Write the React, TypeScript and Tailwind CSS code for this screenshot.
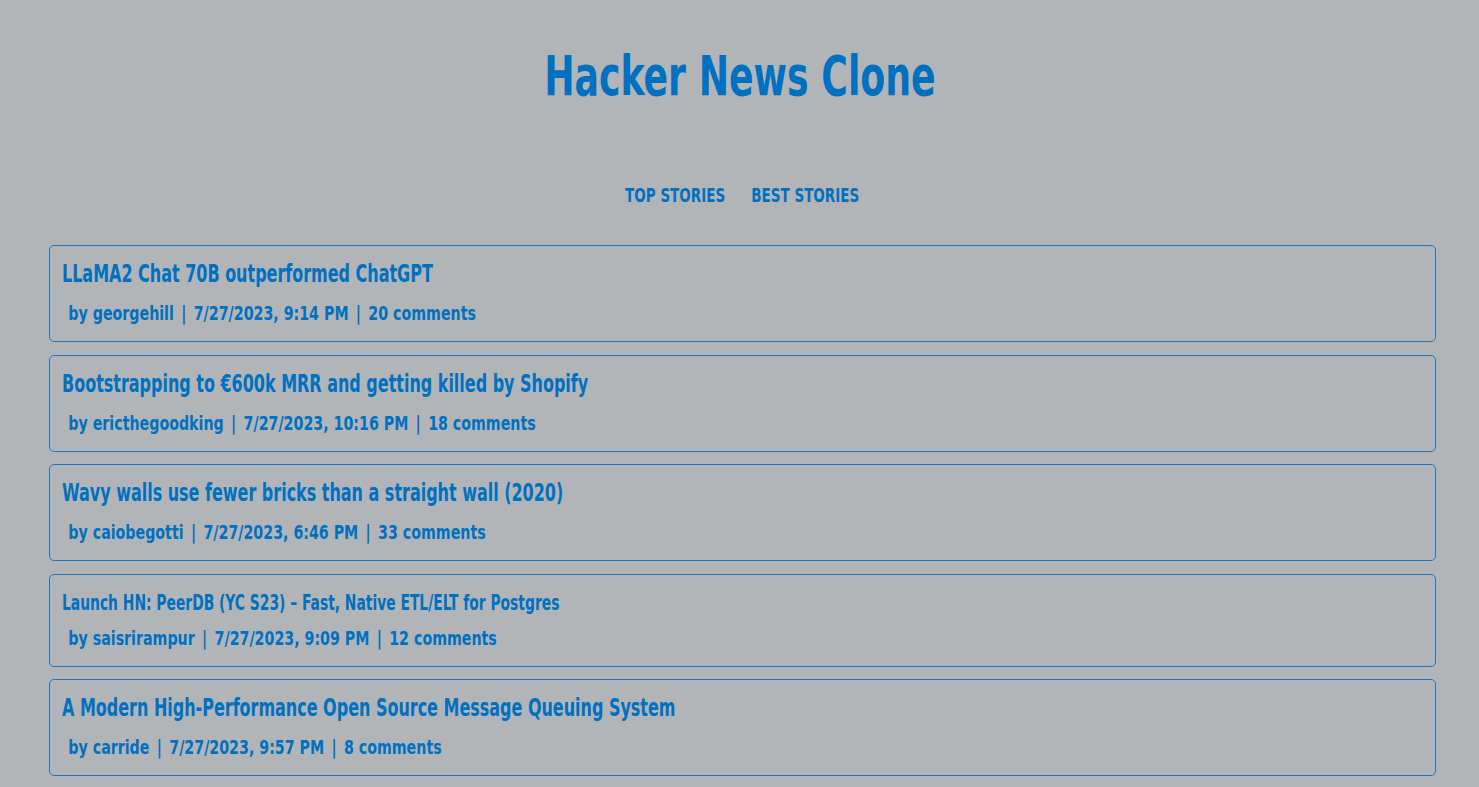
import React from "react";

type Story = {
  title: string;
  by: string;
  time: string;
  comments: number;
  small?: boolean;
};

const stories: Story[] = [
  { title: "LLaMA2 Chat 70B outperformed ChatGPT", by: "georgehill", time: "7/27/2023, 9:14 PM", comments: 20 },
  { title: "Bootstrapping to €600k MRR and getting killed by Shopify", by: "ericthegoodking", time: "7/27/2023, 10:16 PM", comments: 18 },
  { title: "Wavy walls use fewer bricks than a straight wall (2020)", by: "caiobegotti", time: "7/27/2023, 6:46 PM", comments: 33 },
  { title: "Launch HN: PeerDB (YC S23) – Fast, Native ETL/ELT for Postgres", by: "saisrirampur", time: "7/27/2023, 9:09 PM", comments: 12, small: true },
  { title: "A Modern High-Performance Open Source Message Queuing System", by: "carride", time: "7/27/2023, 9:57 PM", comments: 8 },
];

// no Impact installed, so squeeze the condensed DejaVu a bit to get the same look
const font = "font-['Impact','Liberation_Sans_Narrow','DejaVu_Sans_Condensed',sans-serif]";

const StoryCard = ({ story }: { story: Story }) => {
  return (
    <div
      className={
        story.small
          ? "border border-[#2176c0] rounded-[5px] px-3 pt-[14px] pb-[15px] flex flex-col"
          : "border border-[#2176c0] rounded-[5px] px-3 pt-[13px] pb-[15px] flex flex-col"
      }
    >
      <a
        href="#"
        className={
          story.small
            ? "block w-max origin-left scale-x-[0.7] text-[22px] leading-[28px] font-bold"
            : "block w-max origin-left scale-x-[0.74] text-[24px] leading-[30px] font-bold"
        }
      >
        {story.title}
      </a>
      <p
        className={
          story.small
            ? "block w-max origin-left scale-x-[0.79] text-[20px] leading-[26px] font-bold pl-[8px] mt-[8px]"
            : "block w-max origin-left scale-x-[0.79] text-[20px] leading-[26px] font-bold pl-[8px] mt-[11px]"
        }
      >
        by {story.by} <span className="px-[3px]">|</span> {story.time}{" "}
        <span className="px-[3px]">|</span> {story.comments} comments
      </p>
    </div>
  );
};

export default function App() {
  return (
    <div className={`min-h-screen bg-[#b2b5b8] text-[#0070c0] ${font}`}>
      <div className="flex justify-center pt-[44px]">
        <h1 className="origin-center scale-x-[0.72] text-[56px] leading-[64px] font-bold w-max">
          Hacker News Clone
        </h1>
      </div>
      <div className="flex justify-center mt-[74px]">
        <nav className="flex gap-[33px] origin-center scale-x-[0.79] text-[19px] leading-[26px] font-bold w-max ml-[5px]">
          <a href="#">TOP STORIES</a>
          <a href="#">BEST STORIES</a>
        </nav>
      </div>
      <div className="ml-[49px] mr-[43px] mt-[37px] flex flex-col gap-[12.5px] pb-[12px]">
        {stories.map((story, index) => (
          <StoryCard story={story} key={index} />
        ))}
      </div>
    </div>
  );
}
